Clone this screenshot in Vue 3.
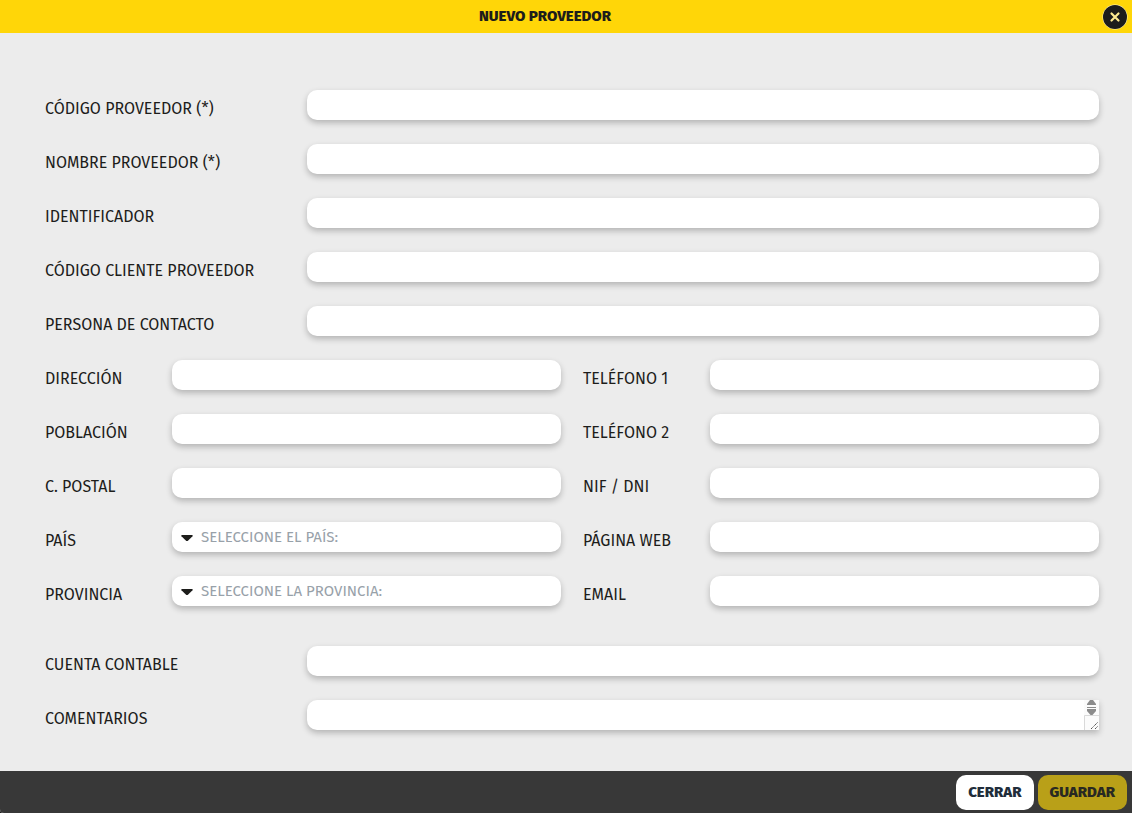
<script setup>
import { reactive } from 'vue'

const topFields = [
  { id: 'codigo', label: 'CÓDIGO PROVEEDOR (*)' },
  { id: 'nombre', label: 'NOMBRE PROVEEDOR (*)' },
  { id: 'identificador', label: 'IDENTIFICADOR' },
  { id: 'codigoCliente', label: 'CÓDIGO CLIENTE PROVEEDOR' },
  { id: 'contacto', label: 'PERSONA DE CONTACTO' },
]

const pairedFields = [
  { id: 'direccion', label: 'DIRECCIÓN' },
  { id: 'telefono1', label: 'TELÉFONO 1' },
  { id: 'poblacion', label: 'POBLACIÓN' },
  { id: 'telefono2', label: 'TELÉFONO 2' },
  { id: 'postal', label: 'C. POSTAL' },
  { id: 'nif', label: 'NIF / DNI' },
  { id: 'pais', label: 'PAÍS', placeholder: 'SELECCIONE EL PAÍS:' },
  { id: 'web', label: 'PÁGINA WEB' },
  { id: 'provincia', label: 'PROVINCIA', placeholder: 'SELECCIONE LA PROVINCIA:' },
  { id: 'email', label: 'EMAIL' },
]

const form = reactive({ pais: '', provincia: '' })
</script>

<template>
  <form class="dialog" @submit.prevent>
    <header class="bar">
      <h1 class="title">NUEVO PROVEEDOR</h1>
      <button class="close" type="button" aria-label="Cerrar ventana">
        <svg width="26" height="26" viewBox="0 0 26 26" aria-hidden="true">
          <circle cx="13" cy="13" r="12.5" fill="#fff3b8" />
          <circle cx="13" cy="13" r="12" fill="#1d1d1b" />
          <path d="M9.500 9.500l7 7M16.500 9.500l-7 7" stroke="#ffeb91" stroke-width="2.200" stroke-linecap="round" />
        </svg>
      </button>
    </header>

    <main class="body">
      <div v-for="f in topFields" :key="f.id" class="row wide">
        <label :for="f.id">{{ f.label }}</label>
        <input :id="f.id" v-model="form[f.id]" class="control" type="text" />
      </div>

      <div class="pairs">
        <div v-for="f in pairedFields" :key="f.id" class="row">
          <label :for="f.id">{{ f.label }}</label>
          <div v-if="f.placeholder" class="select">
            <select :id="f.id" v-model="form[f.id]" class="control">
              <option value="">{{ f.placeholder }}</option>
            </select>
            <svg class="caret" width="12" height="6" viewBox="0 0 12 6" aria-hidden="true">
              <path d="M1 0h10q1.200 .3 .5 1.200L7.200 5.400q-1.200 1-2.400 0L.5 1.200Q-.2 .3 1 0z" fill="#1d1d1b" />
            </svg>
          </div>
          <input v-else :id="f.id" v-model="form[f.id]" class="control" type="text" />
        </div>
      </div>

      <div class="row wide">
        <label for="cuenta">CUENTA CONTABLE</label>
        <input id="cuenta" v-model="form.cuenta" class="control" type="text" />
      </div>
      <div class="row wide">
        <label for="comentarios">COMENTARIOS</label>
        <div class="comments">
          <textarea id="comentarios" v-model="form.comentarios" class="control" rows="1"></textarea>
          <svg class="grip" width="15" height="30" viewBox="0 0 15 30" aria-hidden="true">
            <path d="M0 0h15v30H0z" fill="#fbfbfb" />
            <path d="M6 0h3l3 4v1H3V4zM3 7h9v1H3zM3 9h9v2l-3.500 4h-2L3 11z" fill="#8b8b8b" />
            <path d="M.5 30V15.500H15" fill="none" stroke="#d9d9d9" />
            <path d="M7 29l7-7M11 29l3-3" stroke="#555" stroke-dasharray="1.400 .5" />
          </svg>
        </div>
      </div>
    </main>

    <footer class="actions">
      <button class="button" type="button">CERRAR</button>
      <button class="button save" type="submit">GUARDAR</button>
    </footer>
  </form>
</template>

<style>
body {
  background: #1d1d1b;
}
</style>

<style scoped>
.dialog {
  box-sizing: border-box;
  display: flex;
  flex-direction: column;
  min-height: 100vh;
  overflow: hidden;
  border-radius: 0 0 0 4px;
  background: #ececec;
  color: #1d1d1b;
  font-family: "Fira Sans", "Noto Sans", sans-serif;
}

.bar {
  display: flex;
  align-items: center;
  height: 33px;
  padding: 0 4px 0 0;
  background: #ffd608;
}

.title {
  flex: 1;
  margin: 0;
  padding: 0 12px 2px 0;
  font-size: 15px;
  font-weight: 800;
  line-height: 30px;
  text-align: center;
}

.close {
  display: flex;
  padding: 0;
  border: 0;
  background: none;
  cursor: pointer;
}

.body {
  flex: 1;
  display: flex;
  flex-direction: column;
  gap: 24px;
  padding: 57px 33px 40px 45px;
}

.row {
  display: grid;
  grid-template-columns: 127px minmax(0, 1fr);
}

.wide {
  grid-template-columns: 262px minmax(0, 1fr);
}

.pairs {
  display: grid;
  grid-template-columns: repeat(2, minmax(0, 1fr));
  gap: 24px 22px;
  padding-bottom: 16px;
}

label {
  padding-top: 8px;
  font-size: 16px;
  line-height: 22px;
  white-space: nowrap;
}

.control {
  display: block;
  box-sizing: border-box;
  width: 100%;
  height: 30px;
  margin: 0;
  padding: 0 12px;
  border: 0;
  border-radius: 10px;
  outline: none;
  background: #fff;
  box-shadow: 0 3px 6px rgba(0, 0, 0, 0.24);
  color: #1d1d1b;
  font-family: inherit;
  font-size: 15px;
}

.select,
.comments {
  position: relative;
}

select.control {
  appearance: none;
  padding: 0 29px;
  color: #98a1a9;
}

.caret {
  position: absolute;
  top: 13px;
  left: 9px;
  pointer-events: none;
}

textarea.control {
  padding: 5px 24px 5px 12px;
  border-radius: 10px 0 0 10px;
  overflow: hidden;
  resize: none;
}

.grip {
  position: absolute;
  top: 0;
  right: 0;
}

.actions {
  display: flex;
  align-items: center;
  justify-content: flex-end;
  gap: 4px;
  height: 42px;
  padding: 0 5px 0 0;
  background: #383838;
}

.button {
  height: 35px;
  padding: 0 12px;
  border: 0;
  border-radius: 10px;
  background: #fff;
  color: #212d3a;
  font-family: inherit;
  font-size: 15px;
  font-weight: 800;
  cursor: pointer;
}

.save {
  background: #b9a018;
  color: #292922;
}
</style>
